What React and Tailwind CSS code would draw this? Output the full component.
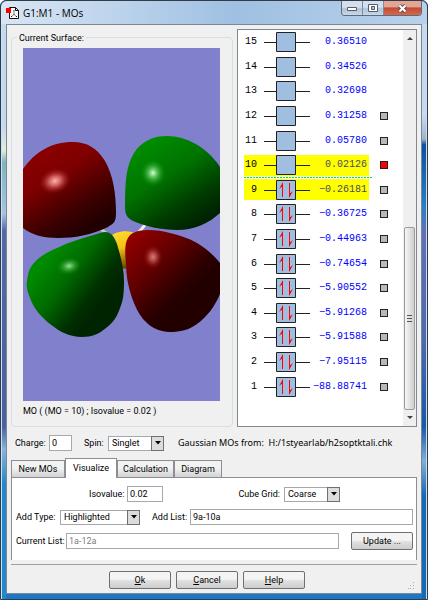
import { useState } from 'react';

const orbitals = [
  { id: 15, energy: '0.36510' },
  { id: 14, energy: '0.34526' },
  { id: 13, energy: '0.32698' },
  { id: 12, energy: '0.31258', surface: true },
  { id: 11, energy: '0.05780', surface: true },
  { id: 10, energy: '0.02126', surface: true, highlighted: true },
  { id: 9, energy: '−0.26181', surface: true, highlighted: true, occupied: true },
  { id: 8, energy: '−0.36725', surface: true, occupied: true },
  { id: 7, energy: '−0.44963', surface: true, occupied: true },
  { id: 6, energy: '−0.74654', surface: true, occupied: true },
  { id: 5, energy: '−5.90552', surface: true, occupied: true },
  { id: 4, energy: '−5.91268', surface: true, occupied: true },
  { id: 3, energy: '−5.91588', surface: true, occupied: true },
  { id: 2, energy: '−7.95115', surface: true, occupied: true },
  { id: 1, energy: '−88.88741', surface: true, occupied: true },
];

const tabs = ['New MOs', 'Visualize', 'Calculation', 'Diagram'];

const fieldClass = 'h-4 border border-[#a5a8ad] bg-white px-0.5 leading-none outline-none';
const buttonClass =
  'h-[18px] rounded-xs border border-[#707070] bg-linear-to-b from-[#f4f4f4] from-45% via-[#e0e0e0] via-55% to-[#cdcdcd] text-center leading-none';

function TitleBar() {
  return (
    <header className="flex h-[23px] items-start justify-between rounded-t-md bg-linear-to-r from-[#d9e6f4] via-[#9fc0e2] via-55% to-[#b9d1ea] pl-[5px] pr-[5px]">
      <div className="flex h-full items-center gap-1">
        <svg viewBox="0 0 13 13" className="h-[13px] w-[13px]">
          <path d="M3.500 1.500h6l3 3v8h-9z" fill="#fff" stroke="#111" />
          <path d="M9.500 1.500v3h3" fill="none" stroke="#111" />
          <path d="M8 5v3M8 8l-2 2.500M8 8l2 2.500" stroke="#777" fill="none" />
          <path d="M5 10h1v1H5zM10 10h1v1h-1zM7.500 4h1v1h-1z" fill="#222" />
          <path d="M0 2h5v5H0z" fill="#f00" />
        </svg>
        <h1 className="font-['Open_Sans','Noto_Sans',sans-serif] text-[10px]">G1:M1 - MOs</h1>
      </div>
      <div className="flex h-[15px] overflow-hidden rounded-b-sm border border-t-0 border-[#5d6b7c]">
        <button aria-label="Minimize" className="grid w-[21px] place-items-center border-r border-[#7d8b9c] bg-linear-to-b from-[#d3dfec] from-45% via-[#b0c2d6] via-55% to-[#c6d8ea]">
          <svg viewBox="0 0 12 8" className="h-2 w-3">
            <path d="M1.500 3.500h9v3h-9z" fill="#fff" stroke="#555c68" />
          </svg>
        </button>
        <button aria-label="Maximize" className="grid w-[21px] place-items-center border-r border-[#7d8b9c] bg-linear-to-b from-[#d3dfec] from-45% via-[#b0c2d6] via-55% to-[#c6d8ea]">
          <svg viewBox="0 0 10 8" className="h-2 w-2.5">
            <path d="M.5.5h9v7h-9z" fill="#fff" stroke="#555c68" />
            <path d="M3.500 2.500h3v3h-3z" fill="#b0c2d6" stroke="#555c68" />
          </svg>
        </button>
        <button aria-label="Close" className="grid w-[37px] place-items-center bg-linear-to-b from-[#e3a595] from-40% via-[#c14c35] via-50% to-[#d6684c]">
          <svg viewBox="0 0 11 9" className="h-[9px] w-[11px]">
            <path d="M2.500 1.500l6 6M8.500 1.500l-6 6" stroke="#5b4a50" strokeWidth="4" />
            <path d="M2.500 1.500l6 6M8.500 1.500l-6 6" stroke="#fff" strokeWidth="2.200" />
          </svg>
        </button>
      </div>
    </header>
  );
}

function SurfaceView() {
  return (
    <svg viewBox="0 0 197 353" preserveAspectRatio="xMidYMid slice" className="h-[353px] w-full bg-[#8080cc]">
      <defs>
        <linearGradient id="redLeft" x1="0.3" y1="0" x2="0.8" y2="0.85">
          <stop offset="0" stopColor="#8c0000" />
          <stop offset="0.35" stopColor="#7c0000" />
          <stop offset="0.75" stopColor="#3c0000" />
          <stop offset="1" stopColor="#200000" />
        </linearGradient>
        <linearGradient id="greenRight" x1="0.2" y1="0.1" x2="0.75" y2="0.95">
          <stop offset="0" stopColor="#008c00" />
          <stop offset="0.4" stopColor="#007200" />
          <stop offset="0.75" stopColor="#003c00" />
          <stop offset="1" stopColor="#002200" />
        </linearGradient>
        <linearGradient id="greenLeft" x1="0.25" y1="0.2" x2="0.8" y2="0.65">
          <stop offset="0" stopColor="#008a00" />
          <stop offset="0.4" stopColor="#006a00" />
          <stop offset="0.8" stopColor="#003000" />
          <stop offset="1" stopColor="#002400" />
        </linearGradient>
        <linearGradient id="redRight" x1="0.1" y1="0.05" x2="0.65" y2="0.65">
          <stop offset="0" stopColor="#900000" />
          <stop offset="0.4" stopColor="#660000" />
          <stop offset="0.85" stopColor="#2c0000" />
          <stop offset="1" stopColor="#220000" />
        </linearGradient>
        <linearGradient id="sulfur" x1="0.1" y1="0" x2="0.4" y2="1">
          <stop offset="0" stopColor="#ffe030" />
          <stop offset="0.5" stopColor="#f4c018" />
          <stop offset="1" stopColor="#6a4c00" />
        </linearGradient>
        <radialGradient id="pinkShine">
          <stop offset="0" stopColor="#ffb4b4" />
          <stop offset="0.35" stopColor="#e07070" stopOpacity="0.85" />
          <stop offset="1" stopColor="#900000" stopOpacity="0" />
        </radialGradient>
        <radialGradient id="mintShine">
          <stop offset="0" stopColor="#d8ffd8" />
          <stop offset="0.35" stopColor="#60c860" stopOpacity="0.85" />
          <stop offset="1" stopColor="#008800" stopOpacity="0" />
        </radialGradient>
      </defs>
      <path d="M75 179l8 6" stroke="#c8c8c8" strokeWidth="3" />
      <path d="M116 184l6-7" stroke="#eee" strokeWidth="3" />
      <path d="M87 189c4-6 20-8 26-3l-8 20-2 15c-5 0-9-6-11-16z" fill="url(#sulfur)" />
      <path d="M0 121C12 104 28 94 50 94c14 0 24 6 32 19 8 14 11 32 11 52 0 9-2 10-8 14-16 8-34 11-50 11-14 0-26-3-35-10z" fill="url(#redLeft)" />
      <path d="M102 159c0-25 1-41 9-54 7-11 18-17 33-17 19 0 40 11 53 31v46c-11 10-25 17-43 17-15 0-33-4-44-9-5-3-8-5-8-14z" fill="url(#greenRight)" />
      <path d="M82 184c6 0 9 4 12 12 3 10 7 24 7 37 0 14-1 20-4 27-3 9-7 15-14 20-7 6-14 9-24 9-12 0-22-5-32-13S10 259 7 250c-3-7-4-12-3-17 1-7 2-12 6-17 6-7 14-12 24-16 12-6 26-10 40-14 3-1 5-2 8-2z" fill="url(#greenLeft)" />
      <path d="M125 182c8 0 15 1 22 3 9 2 18 5 27 10 8 5 16 11 23 20v31c-5 12-13 23-23 30-8 6-17 8-27 8-11 0-20-5-27-13-5-6-8-13-11-21-4-12-6-23-6-34-1-10-1-16 0-21 1-4 3-8 7-10s9-3 15-3z" fill="url(#redRight)" />
      <ellipse cx="32" cy="133" rx="17" ry="13" transform="rotate(-18 32 133)" fill="url(#pinkShine)" />
      <ellipse cx="130" cy="125" rx="13" ry="14" fill="url(#mintShine)" />
      <ellipse cx="46" cy="218" rx="13" ry="9" transform="rotate(-12 46 218)" fill="url(#mintShine)" opacity="0.75" />
      <ellipse cx="130" cy="209" rx="10" ry="12" fill="url(#pinkShine)" opacity="0.7" />
    </svg>
  );
}

function OrbitalGlyph({ occupied }) {
  return (
    <svg viewBox="0 0 46 20" className="h-5 w-[46px] shrink-0">
      <path d="M0 10.500h46" stroke="#222" />
      <path d="M12.500.5h19v19h-19z" fill="#a0bee0" stroke="#222" />
      {occupied && (
        <g fill="#f00">
          <path d="M18 3h1v14h-1zM19 2v5h-1.500L15 9z" />
          <path d="M25 3h1v14h-1zM25 18v-5h1.500l2.500-2z" />
        </g>
      )}
    </svg>
  );
}

function OrbitalRow({ orbital }) {
  return (
    <li className="relative flex flex-1 items-center">
      <div className={`flex h-[21px] flex-1 items-center gap-[7px] pr-0.5 ${orbital.highlighted ? 'bg-[#ffff00]' : ''}`}>
        <span className="w-[13px] text-right">{orbital.id}</span>
        <OrbitalGlyph occupied={orbital.occupied} />
        <span className={`-ml-2 flex-1 text-right ${orbital.highlighted ? 'text-[#4a4a60]' : 'text-[#0000ff]'}`}>{orbital.energy}</span>
      </div>
      <div className="flex w-[34px] pl-[11px]">
        {orbital.surface && (
          <input
            type="checkbox"
            aria-label={`Show surface ${orbital.id}`}
            defaultChecked={orbital.id === 10}
            className="h-2 w-2 appearance-none border border-[#222] bg-[#b8b8b8] checked:bg-[#ff0000]"
          />
        )}
      </div>
      {orbital.id === 10 && (
        <div className="absolute bottom-0 left-0 right-[30px] z-10 h-px bg-[repeating-linear-gradient(90deg,#00f000_0px,#00f000_2px,transparent_2px,transparent_3px)]" />
      )}
    </li>
  );
}

function Scrollbar() {
  return (
    <div className="flex w-[13px] flex-col items-center bg-[#efefef]">
      <svg viewBox="0 0 6 4" className="mt-1.5 h-1 w-1.5">
        <path d="M0 4l3-3 3 3z" fill="#444" />
      </svg>
      <div className="mt-[187px] grid w-[11px] flex-1 place-items-center rounded-xs border border-[#9a9a9a] bg-linear-to-r from-[#f6f6f6] to-[#cfcfcf]">
        <svg viewBox="0 0 5 7" className="h-[7px] w-[5px]">
          <path d="M0 .5h5M0 3.500h5M0 6.500h5" stroke="#555" />
        </svg>
      </div>
      <svg viewBox="0 0 6 4" className="my-1.5 h-1 w-1.5">
        <path d="M0 0l3 3 3-3z" fill="#444" />
      </svg>
    </div>
  );
}

function Select({ id, options, className }) {
  return (
    <div className={`relative h-[15px] ${className}`}>
      <select id={id} className="block h-full w-full appearance-none border border-[#a5a8ad] bg-white pl-[3px] leading-none outline-none">
        {options.map((option) => (
          <option key={option}>{option}</option>
        ))}
      </select>
      <span className="pointer-events-none absolute inset-y-0 right-0 grid w-[13px] place-items-center border border-[#707070] bg-[#dcdcdc]">
        <svg viewBox="0 0 6 4" className="h-1 w-1.5">
          <path d="M0 0h6l-3 3.500z" fill="#000" />
        </svg>
      </span>
    </div>
  );
}

function Tabs({ active, onSelect }) {
  return (
    <div role="tablist" className="flex h-[19px] items-end">
      {tabs.map((tab) => (
        <button
          key={tab}
          role="tab"
          aria-selected={tab === active}
          onClick={() => onSelect(tab)}
          className={
            tab === active
              ? 'relative z-10 -mb-px h-5 w-[52px] border border-b-0 border-[#8c8e94] bg-white pb-0.5'
              : 'h-[17px] w-[57px] border border-b-0 border-[#8c8e94] bg-linear-to-b from-[#f2f2f2] from-45% to-[#d2d2d2] first:w-[54px] last:w-12'
          }
        >
          {tab}
        </button>
      ))}
    </div>
  );
}

function VisualizePanel() {
  return (
    <div className="flex flex-col gap-[7px] border border-b-0 border-[#8c8e94] bg-white pb-2.5 pl-1 pr-[3px] pt-2">
      <div className="flex h-4 items-center justify-between pl-[73px] pr-[73px]">
        <div className="flex items-center">
          <label htmlFor="isovalue" className="w-[38px]">Isovalue:</label>
          <input id="isovalue" defaultValue="0.02" className={`${fieldClass} w-9`} />
        </div>
        <div className="flex items-center gap-1">
          <label htmlFor="grid">Cube Grid:</label>
          <Select id="grid" options={['Coarse', 'Medium', 'Fine']} className="w-14" />
        </div>
      </div>
      <div className="flex h-4 items-center">
        <label htmlFor="addType" className="w-11">Add Type:</label>
        <Select id="addType" options={['Highlighted', 'Custom']} className="w-20" />
        <label htmlFor="addList" className="ml-3 w-[38px]">Add List:</label>
        <input id="addList" defaultValue="9a-10a" className={`${fieldClass} min-w-0 flex-1`} />
      </div>
      <div className="flex h-[18px] items-center">
        <label htmlFor="currentList" className="w-[50px]">Current List:</label>
        <input id="currentList" readOnly value="1a-12a" className={`${fieldClass} min-w-0 flex-1 text-[#808080]`} />
        <button className={`${buttonClass} ml-3 w-[62px]`}>Update ...</button>
      </div>
    </div>
  );
}

export default function App() {
  const [tab, setTab] = useState('Visualize');

  return (
    <div className="flex min-h-screen flex-col rounded-t-md border border-[#303c48] bg-[#1c78c4] font-['Roboto','Liberation_Sans',sans-serif] text-[9px] leading-3 whitespace-nowrap text-black">
      <TitleBar />
      <div className="flex flex-1">
        <div className="w-[5px] border-l border-[#c8e0f4] bg-[linear-gradient(#c5daef_18%,#e4ecd8_22%,#7fb5c0_24%,#a8c4dc_33%,#5268a8_36%,#4c60a0_70%,#8ab4d8_74%,#2488cc_80%)]" />
        <main className="mb-[5px] flex min-w-0 flex-1 flex-col border border-[#7b8896] bg-[#f0f0f0] px-1 pt-1">
          <div className="flex gap-1">
            <fieldset className="mt-px min-w-0 flex-1 rounded-sm border border-[#d5dfe5] pb-[9px] pl-[11px] pr-3">
              <legend className="-ml-1.5 px-0.5 pt-0.5">Current Surface:</legend>
              <div className="pt-1">
                <SurfaceView />
              </div>
              <p className="mt-1">MO ( (MO = 10) ; Isovalue = 0.02 )</p>
            </fieldset>
            <div className="flex w-[180px] justify-between border border-[#828790] bg-white">
              <ul className="flex h-[369px] flex-1 flex-col pl-1.5 font-['Liberation_Mono',monospace] text-[10px]">
                {orbitals.map((orbital) => (
                  <OrbitalRow key={orbital.id} orbital={orbital} />
                ))}
              </ul>
              <Scrollbar />
            </div>
          </div>

          <div className="mb-[7px] mt-2 flex h-4 items-center pl-1">
            <label htmlFor="charge" className="w-[34px]">Charge:</label>
            <input id="charge" defaultValue="0" className={`${fieldClass} w-[23px]`} />
            <label htmlFor="spin" className="ml-3 w-6">Spin:</label>
            <Select id="spin" options={['Singlet', 'Triplet']} className="w-14" />
            <p className="ml-3.5 whitespace-pre font-['Noto_Sans','Open_Sans',sans-serif]">
              {'Gaussian MOs from:  H:/1styearlab/h2soptktali.chk'}
            </p>
          </div>

          <Tabs active={tab} onSelect={setTab} />
          <VisualizePanel />

          <footer className="relative mt-1 flex justify-center gap-[5px] border-t border-[#a0a0a0] pb-1 pr-3.5 pt-1.5">
            <button className={`${buttonClass} w-[62px]`}><u>O</u>k</button>
            <button className={`${buttonClass} w-[62px]`}><u>C</u>ancel</button>
            <button className={`${buttonClass} w-[62px]`}><u>H</u>elp</button>
            <svg viewBox="0 0 7 7" className="absolute bottom-1 right-0.5 h-[7px] w-[7px]">
              <path d="M5 0h1v1H5zM5 3h1v1H5zM2 3h1v1H2zM5 6h1v1H5zM2 6h1v1H2zM0 6h1v1H0z" fill="#aaa" />
            </svg>
          </footer>
        </main>
        <div className="w-[5px] border-r border-[#c8e0f4] bg-[linear-gradient(#c5daef_16%,#a0b4c8_20%,#0c50a0_21%,#2c80c4_32%,#6070b8_36%,#5068b0_55%,#1858a8_70%,#80b0d8_76%,#1868b4_82%)]" />
      </div>
    </div>
  );
}
